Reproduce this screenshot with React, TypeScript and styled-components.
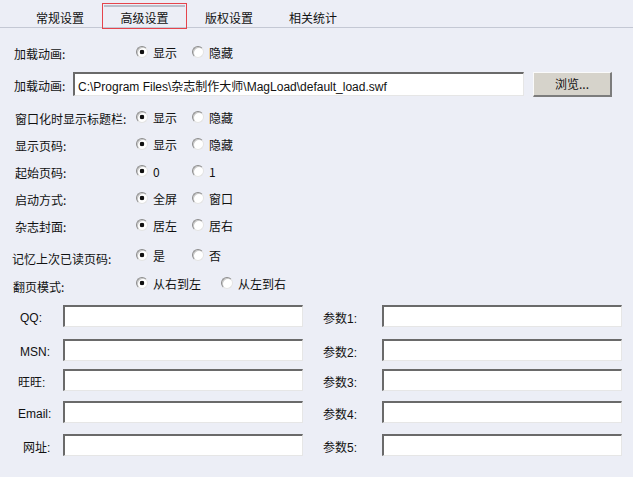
import React from "react";
import styled, { createGlobalStyle } from "styled-components";

const Global = createGlobalStyle`
  html, body { margin: 0; padding: 0; background: #eceef6; }
  body { font-family: "Liberation Sans", "Noto Sans CJK SC", sans-serif; font-size: 12px; color: #111; }
`;

const Page = styled.div`
  width: 633px;
  height: 477px;
  background: #eceef6;
  display: flex;
  flex-direction: column;
  overflow: hidden;
`;

const TabBar = styled.div`
  height: 27px;
  border-bottom: 1px solid #c4c8d4;
  display: flex;
  align-items: flex-start;
  padding-left: 18px;
`;

const Tab = styled.div<{ $active?: boolean }>`
  box-sizing: border-box;
  width: ${(p) => (p.$active ? 85 : 84)}px;
  height: 26px;
  margin-top: 3px;
  display: flex;
  flex-direction: column;
  align-items: center;
  border: 1px solid ${(p) => (p.$active ? "#e5444c" : "transparent")};
  position: relative;
  z-index: 1;
  &::before {
    content: "";
    align-self: stretch;
    height: 2px;
    margin: 1px 1px 0;
    background: ${(p) => (p.$active ? "#b9bdc9" : "transparent")};
  }
`;

const TabText = styled.span`
  margin-top: 4px;
  font-family: "Noto Sans CJK SC", sans-serif;
  font-size: 12px;
  line-height: 14px;
`;

const Content = styled.div`
  display: flex;
  flex-direction: column;
  padding: 12px 11px 0 14px;
`;

const Row = styled.div<{ $mt: number }>`
  height: 24px;
  margin-top: ${(p) => p.$mt}px;
  display: flex;
  align-items: center;
`;

const Label = styled.span<{ $dx?: number; $dy?: number }>`
  width: ${(p) => 122 - (p.$dx || 0)}px;
  margin-left: ${(p) => p.$dx || 0}px;
  padding-top: ${(p) => p.$dy || 2}px;
  font-family: "Noto Sans CJK SC", sans-serif;
  font-size: 12px;
  white-space: nowrap;
  flex-shrink: 0;
`;

const ShortLabel = styled(Label)`
  width: 59px;
`;

const Option = styled.label<{ $w: number }>`
  width: ${(p) => p.$w}px;
  display: flex;
  align-items: center;
  gap: 5px;
  flex-shrink: 0;
`;

const OptText = styled.span`
  font-family: "Noto Sans CJK SC", sans-serif;
  font-size: 12px;
  padding-top: 1px;
`;

const Radio = styled.input.attrs({ type: "radio" })`
  appearance: none;
  margin: 0;
  width: 12px;
  height: 12px;
  box-sizing: border-box;
  border-radius: 50%;
  border: 1px solid;
  border-color: #8c8c8c #e4e4e4 #e4e4e4 #8c8c8c;
  background: #fff;
  box-shadow: inset 1px 1px 0 #c8c8c8;
  &:checked {
    background: radial-gradient(circle at 50% 50%, #111 0 2px, #fff 2.6px);
  }
`;

const TextBox = styled.input<{ $w: number; $h?: number }>`
  box-sizing: border-box;
  width: ${(p) => p.$w}px;
  height: ${(p) => p.$h || 22}px;
  margin: 0;
  padding: 1px 3px 0;
  background: #fff;
  border-style: solid;
  border-width: 2px 1px 1px 2px;
  border-color: #6a6a6a #e6e6e6 #e6e6e6 #6a6a6a;
  font-family: "Liberation Sans", "Noto Sans CJK SC", sans-serif;
  font-size: 12px;
  color: #111;
  outline: none;
`;

const Button = styled.button`
  box-sizing: border-box;
  width: 79px;
  height: 25px;
  margin-left: 9px;
  background: #d6d3cb;
  border-style: solid;
  border-width: 1px 2px 2px 1px;
  border-color: #fafafa #7c7c7c #7c7c7c #fafafa;
  font-family: "Noto Sans CJK SC", sans-serif;
  font-size: 12px;
  color: #111;
  padding: 0;
`;

const Grid = styled.div`
  display: flex;
  flex-direction: column;
  margin-top: 10px;
  padding-left: 4px;
`;

const GridRow = styled.div<{ $mt: number }>`
  display: flex;
  align-items: center;
  height: 22px;
  margin-top: ${(p) => p.$mt}px;
`;

const FieldLabel = styled.span<{ $dx?: number }>`
  width: ${(p) => 45 - (p.$dx || 0)}px;
  margin-left: ${(p) => p.$dx || 0}px;
  padding-top: 3px;
  font-family: "Liberation Sans", "Noto Sans CJK SC", sans-serif;
  font-size: 12px;
  flex-shrink: 0;
`;

const Spacer = styled.div`
  width: 20px;
  flex-shrink: 0;
`;

type RadioRow = {
  label: string;
  opts: string[];
  mt: number;
  w?: number;
  dx?: number;
  dy?: number;
};

const radioRowsA: RadioRow[] = [{ label: "加载动画:", opts: ["显示", "隐藏"], mt: 0 }];

const radioRowsB: RadioRow[] = [
  { label: "窗口化时显示标题栏:", opts: ["显示", "隐藏"], mt: 9, dx: 1 },
  { label: "显示页码:", opts: ["显示", "隐藏"], mt: 3, dx: 1 },
  { label: "起始页码:", opts: ["0", "1"], mt: 3, dx: 1 },
  { label: "启动方式:", opts: ["全屏", "窗口"], mt: 3, dx: 1 },
  { label: "杂志封面:", opts: ["居左", "居右"], mt: 3, dx: 1 },
  { label: "记忆上次已读页码:", opts: ["是", "否"], mt: 6, dx: -2, dy: 7 },
  { label: "翻页模式:", opts: ["从右到左", "从左到右"], mt: 4, w: 85, dx: -1, dy: 6 },
];

const fields = [
  { left: "QQ:", right: "参数1:", mt: 0, dx: 2 },
  { left: "MSN:", right: "参数2:", mt: 12, dx: 2 },
  { left: "旺旺:", right: "参数3:", mt: 8, dx: 0 },
  { left: "Email:", right: "参数4:", mt: 10, dx: 0 },
  { left: "网址:", right: "参数5:", mt: 11, dx: 5 },
];

const RadioLine: React.FC<{ row: RadioRow; idx: number }> = ({ row, idx }) => (
  <Row $mt={row.mt}>
    <Label $dx={row.dx} $dy={row.dy}>
      {row.label}
    </Label>
    {row.opts.map((o, i) => (
      <Option key={o} $w={row.w || 56}>
        <Radio name={`g${idx}`} defaultChecked={i === 0} />
        <OptText>{o}</OptText>
      </Option>
    ))}
  </Row>
);

export default function App() {
  return (
    <Page>
      <Global />
      <TabBar>
        <Tab>
          <TabText>常规设置</TabText>
        </Tab>
        <Tab $active>
          <TabText>高级设置</TabText>
        </Tab>
        <Tab>
          <TabText>版权设置</TabText>
        </Tab>
        <Tab>
          <TabText>相关统计</TabText>
        </Tab>
      </TabBar>
      <Content>
        {radioRowsA.map((r, i) => (
          <RadioLine key={r.label} row={r} idx={i} />
        ))}
        <Row $mt={8}>
          <ShortLabel>加载动画:</ShortLabel>
          <TextBox
            $w={451}
            $h={24}
            readOnly
            defaultValue={"C:\\Program Files\\杂志制作大师\\MagLoad\\default_load.swf"}
          />
          <Button>浏览...</Button>
        </Row>
        {radioRowsB.map((r, i) => (
          <RadioLine key={r.label} row={r} idx={i + 1} />
        ))}
        <Grid>
          {fields.map((f) => (
            <GridRow key={f.left} $mt={f.mt}>
              <FieldLabel $dx={f.dx}>{f.left}</FieldLabel>
              <TextBox $w={240} />
              <Spacer />
              <FieldLabel style={{ width: 59 }}>{f.right}</FieldLabel>
              <TextBox $w={240} />
            </GridRow>
          ))}
        </Grid>
      </Content>
    </Page>
  );
}
